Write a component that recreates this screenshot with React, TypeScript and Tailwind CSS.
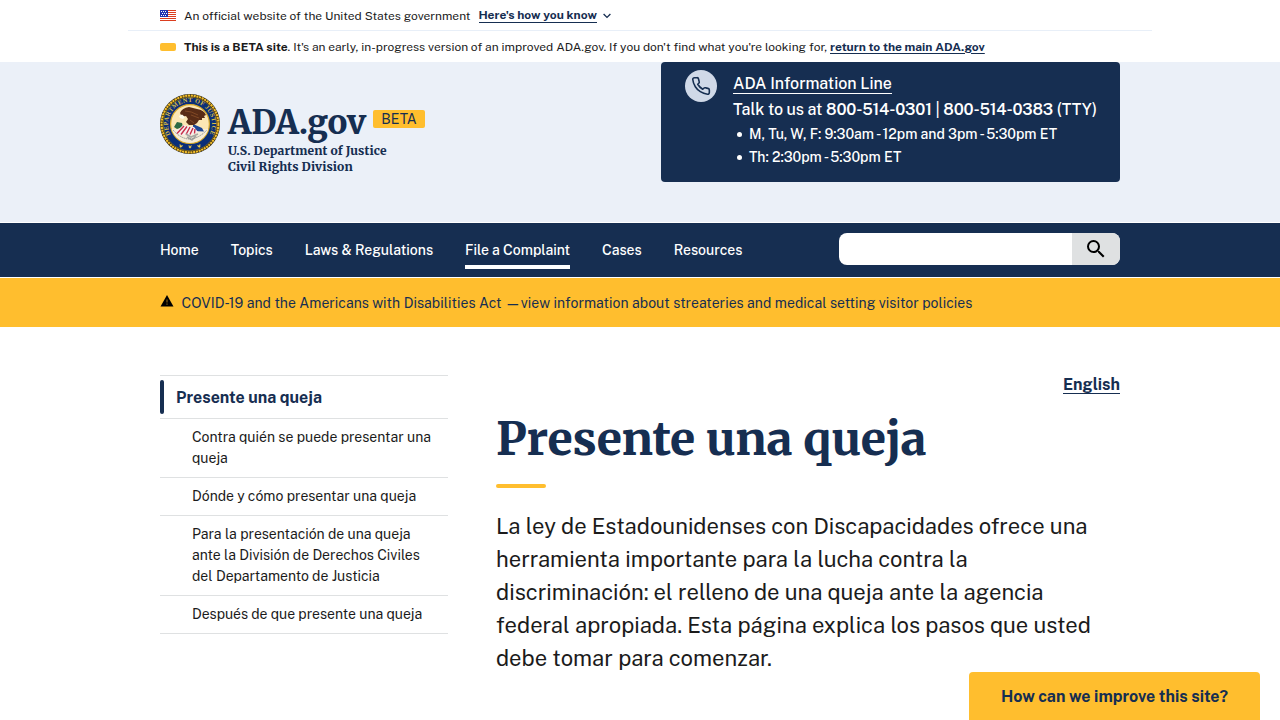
const pad = "mx-auto w-[1024px] px-8";

function Flag() {
  return (
    <svg width="16" height="11" viewBox="0 0 16 11" shapeRendering="crispEdges">
      <rect width="16" height="11" fill="#fff" />
      {[0, 2, 4, 6, 8, 10].map((y) => (
        <rect key={y} y={y} width="16" height="1" fill="#db3e1f" />
      ))}
      <rect width="8" height="7" fill="#1e33b1" />
      {[1, 3, 5].map((y) =>
        [1, 3, 5].map((x) => <rect key={`${x}-${y}`} x={x + (y === 3 ? 1 : 0)} y={y} width="1" height="1" fill="#fff" />)
      )}
    </svg>
  );
}

function Seal() {
  return (
    <svg width="60" height="60" viewBox="0 0 60 60">
      <defs>
        <path id="sealArc" d="M11.200 41.500 A22 22 0 1 1 48.800 41.500" />
        <clipPath id="sealInner"><circle cx="30" cy="30" r="19" /></clipPath>
      </defs>
      <circle cx="30" cy="30" r="30" fill="#1d1a10" />
      <circle cx="30" cy="30" r="28.400" fill="none" stroke="#f0bb2a" strokeWidth="2.200" strokeDasharray="2.200 0.600" />
      <circle cx="30" cy="30" r="26.800" fill="#0b2f78" />
      <circle cx="30" cy="30" r="26.800" fill="none" stroke="#8a6f1e" strokeWidth="0.800" />
      <text fontSize="6.400" fontWeight="700" fill="#d9bd45" fontFamily="Liberation Serif, serif">
        <textPath href="#sealArc" textLength="90" startOffset="1">DEPARTMENT OF JUSTICE</textPath>
      </text>
      <circle cx="30" cy="30" r="19.400" fill="#fbe6b4" stroke="#d8a92a" strokeWidth="1.200" />
      <g clipPath="url(#sealInner)">
        <path d="M11 35 H49 V50 H11z" fill="#f6ecd8" />
        <path d="M33 30 L42 34 L44 37.500 L33 37z" fill="#1e4794" />
        <path d="M14 33 L17 28 L22 29 L23 33 L17 35z" fill="#2c6a45" />
        <path d="M15 39 L23 31 L34 33 L38 38 L31 41 L20 41z" fill="#f7efee" />
        <path d="M17 39.500 L24 32 M21 40.500 L27 32.500 M26 40.500 L30 33 M30 40.500 L33 34 M34.500 39.500 L35 35" stroke="#c8304b" strokeWidth="1.400" />
        <path d="M26 40 L31 43 L38 40 M27 43 L32 46 L36 42" fill="none" stroke="#a7a7a2" strokeWidth="1.600" />
        <path d="M13 36 Q29 54 47 36" fill="none" stroke="#8d8f8d" strokeWidth="1" strokeDasharray="1.400 0.800" />
      </g>
      <path d="M20 19 Q22 14 29 13 L37 15 Q44 16 46 21 L44 22 L45 24 L42 24 L42 26 L39 26 L37 29 L34 31 L29 31 L26 28 L28 25 L26 22 L22 23z" fill="#592c16" />
      <path d="M25 17 Q31 17 38 21 M30 26 L34 29 M31 21 L39 24" fill="none" stroke="#8b512a" strokeWidth="0.800" />
      <path d="M19 22 L22 20.500 L25 23 L23 25 L20 24z" fill="#fffbe8" />
      <path d="M20 50.500 l1 1.500 l1.500 -.5 l-1 1.500 l-1.500 .2z M29 51.500 l1 1.800 l1.200 -1.800 l-.6 2.400 h-1.200z M40 50.500 l-1 1.500 l-1.500 -.5 l1 1.500 l1.500 .2z" fill="#f3cf4b" stroke="#f3cf4b" strokeWidth="0.600" />
    </svg>
  );
}

function Banners() {
  return (
    <div className="bg-white text-[12px] leading-4 text-[#1b1b1b]">
      <div className="mx-auto flex h-[31px] w-[1024px] items-center border-b border-[#e8eff8] px-8 pt-px">
        <Flag />
        <span className="ml-2">An official website of the United States government</span>
        <a className="mt-px ml-2 border-b border-[#162e51] leading-[13px] font-bold tracking-[0.03px] text-[#162e51]">Here's how you know</a>
        <svg className="ml-1.5" width="8" height="6" viewBox="0 0 8 6" fill="none" stroke="#162e51" strokeWidth="1.300">
          <path d="M.6 1 L4 4.400 L7.400 1" />
        </svg>
      </div>
      <div className={`${pad} flex h-[31px] items-center`}>
        <span className="h-2 w-4 rounded-[2px] bg-[#ffbe2e]" />
        <p className="ml-2 whitespace-pre">
          <b>This is a BETA site</b>. It's an early, in-progress version of an improved ADA.gov. If you don't find what you're looking for,{" "}
          <a className="font-bold text-[#162e51] underline underline-offset-2">return to the main ADA.gov</a>
        </p>
      </div>
    </div>
  );
}

function Header() {
  return (
    <header className="h-40 bg-[#ebf0f8]">
      <div className={`${pad} flex items-start justify-between`}>
        <div className="flex gap-2 pt-8 font-['Merriweather','Noto_Serif','DejaVu_Serif',serif] font-extrabold text-[#162e51]">
          <Seal />
          <div>
            <div className="flex items-center">
              <span className="mt-[9px] w-[138px] text-[33px] leading-10 tracking-[-0.25px]">ADA.gov</span>
              <span className="ml-[7px] flex h-[18px] w-[52px] items-center justify-center rounded-[2px] bg-[#ffbe2e] font-['Public_Sans',Inter,sans-serif] text-[14px] leading-none font-normal">BETA</span>
            </div>
            <p className="text-[12px] leading-4 tracking-[0.12px]">U.S. Department of Justice<br />Civil Rights Division</p>
          </div>
        </div>
        <div className="flex h-[120px] w-[459px] gap-4 rounded-[4px] bg-[#162e51] px-6 pt-2 text-white">
          <span className="flex size-8 shrink-0 items-center justify-center rounded-full bg-[#d0d9e8]">
            <svg width="20" height="20" viewBox="0 0 24 24" fill="none" stroke="#162e51" strokeWidth="1.900" strokeLinecap="round" strokeLinejoin="round">
              <path d="M22 16.920v3a2 2 0 0 1-2.180 2 19.790 19.790 0 0 1-8.630-3.070 19.500 19.500 0 0 1-6-6 19.790 19.790 0 0 1-3.070-8.670A2 2 0 0 1 4.110 2h3a2 2 0 0 1 2 1.720 12.840 12.840 0 0 0 .7 2.810 2 2 0 0 1-.45 2.110L8.090 9.910a16 16 0 0 0 6 6l1.270-1.270a2 2 0 0 1 2.110-.45 12.840 12.840 0 0 0 2.810.7A2 2 0 0 1 22 16.920z" />
            </svg>
          </span>
          <div className="pt-px font-medium whitespace-nowrap">
            <p className="flex h-[26px] items-center text-[16px] tracking-[-0.04px]"><a className="-mt-px border-b border-white pt-px leading-[18px]">ADA Information Line</a></p>
            <p className="text-[16px] leading-[26px] tracking-[-0.08px]">
              Talk to us at <span className="font-semibold tracking-[-0.16px]">800-514-0301</span> | <span className="font-semibold tracking-[-0.16px]">800-514-0383</span> (TTY)
            </p>
            <ul className="text-[14px] leading-[23px] tracking-[-0.04px]">
              {["M, Tu, W, F: 9:30am - 12pm and 3pm - 5:30pm ET", "Th: 2:30pm - 5:30pm ET"].map((t) => (
                <li key={t} className="flex items-center gap-[7px] pl-1">
                  <span className="size-[5px] rounded-full bg-white" />{t}
                </li>
              ))}
            </ul>
          </div>
        </div>
      </div>
    </header>
  );
}

function Nav() {
  const links = ["Home", "Topics", "Laws & Regulations", "File a Complaint", "Cases", "Resources"];
  return (
    <nav className="h-14 border-y border-white bg-[#162e51]">
      <div className={`${pad} flex h-full items-center justify-between`}>
        <div className="flex h-full gap-8 text-[14px] font-medium text-white">
          {links.map((l) => (
            <a key={l} className={`mb-2 flex items-center border-b-4 pt-3 ${l === "File a Complaint" ? "border-white tracking-[-0.04px]" : "border-transparent"}`}>{l}</a>
          ))}
        </div>
        <div className="mb-0.5 flex h-8 w-[281px] overflow-hidden rounded-[8px] bg-white">
          <div className="flex-1" />
          <button className="flex w-12 items-center justify-center bg-[#dfe1e2]">
            <svg width="24" height="24" viewBox="0 0 24 24">
              <path d="M15.500 14h-.79l-.28-.27A6.471 6.471 0 0 0 16 9.500 6.500 6.500 0 1 0 9.500 16c1.610 0 3.090-.59 4.230-1.570l.27.28v.79l5 4.990L20.490 19l-4.990-5zm-6 0C7.010 14 5 11.990 5 9.500S7.010 5 9.500 5 14 7.010 14 9.500 11.990 14 9.500 14z" />
            </svg>
          </button>
        </div>
      </div>
    </nav>
  );
}

function Sidebar() {
  const items = [
    "Contra quién se puede presentar una queja",
    "Dónde y cómo presentar una queja",
    "Para la presentación de una queja ante la División de Derechos Civiles del Departamento de Justicia",
    "Después de que presente una queja",
  ];
  return (
    <aside className="w-72 border-b border-[#dfe1e2]">
      <div className="flex h-[43px] items-center border-t border-[#dfe1e2]">
        <span className="h-[34px] w-1 rounded-full bg-[#162e51]" />
        <b className="mt-0.5 ml-3 text-[16px] text-[#162e51]">Presente una queja</b>
      </div>
      {items.map((t) => (
        <a key={t} className="block border-t border-[#dfe1e2] py-2 pr-4 pl-8 text-[14px] leading-[21px]">{t}</a>
      ))}
    </aside>
  );
}

export default function App() {
  return (
    <div className="relative h-screen overflow-hidden bg-white font-['Public_Sans',Inter,sans-serif] text-[#1b1b1b]">
      <Banners />
      <Header />
      <Nav />
      <div className="h-[49px] bg-[#ffbe2e] text-[#162e51]">
        <div className={`${pad} flex h-full items-center`}>
          <svg className="mb-1" width="14" height="12" viewBox="0 0 14 12">
            <path d="M7 0 L13.500 11.500 H.5z" />
            <path d="M6.500 4.500h1v3h-1z M6.500 8.500h1v1.200h-1z" fill="#ffbe2e" opacity=".6" />
          </svg>
          <span className="mt-0.5 ml-[7.500px] text-[14px] tracking-[0.035px]">COVID-19 and the Americans with Disabilities Act</span>
          <span className="mt-0.5 ml-[3.500px] text-[14px] tracking-[0.035px]">—view information about streateries and medical setting visitor policies</span>
        </div>
      </div>
      <div className={`${pad} flex items-start gap-12 pt-12`}>
        <Sidebar />
        <main className="flex-1">
          <div className="flex justify-end"><a className="border-b border-[#162e51] pt-px text-[16px] leading-[17px] font-bold text-[#162e51]">English</a></div>
          <h1 className="mt-[15px] font-['Merriweather','Noto_Serif','DejaVu_Serif',serif] text-[46px] leading-[60px] font-extrabold tracking-[-0.1px] text-[#162e51]">Presente una queja</h1>
          <div className="mt-[15px] h-1 w-[50px] rounded-full bg-[#ffbe2e]" />
          <p className="mt-[22px] text-[22px] leading-[33px]">La ley de Estadounidenses con Discapacidades ofrece una herramienta importante para la lucha contra la discriminación: el relleno de una queja ante la agencia federal apropiada. Esta página explica los pasos que usted debe tomar para comenzar.</p>
        </main>
      </div>
      <button className="absolute right-5 bottom-0 h-12 w-[291px] rounded-t-[4px] bg-[#ffbe2e] pt-0.5 text-[16px] font-bold text-[#162e51]">How can we improve this site?</button>
    </div>
  );
}
